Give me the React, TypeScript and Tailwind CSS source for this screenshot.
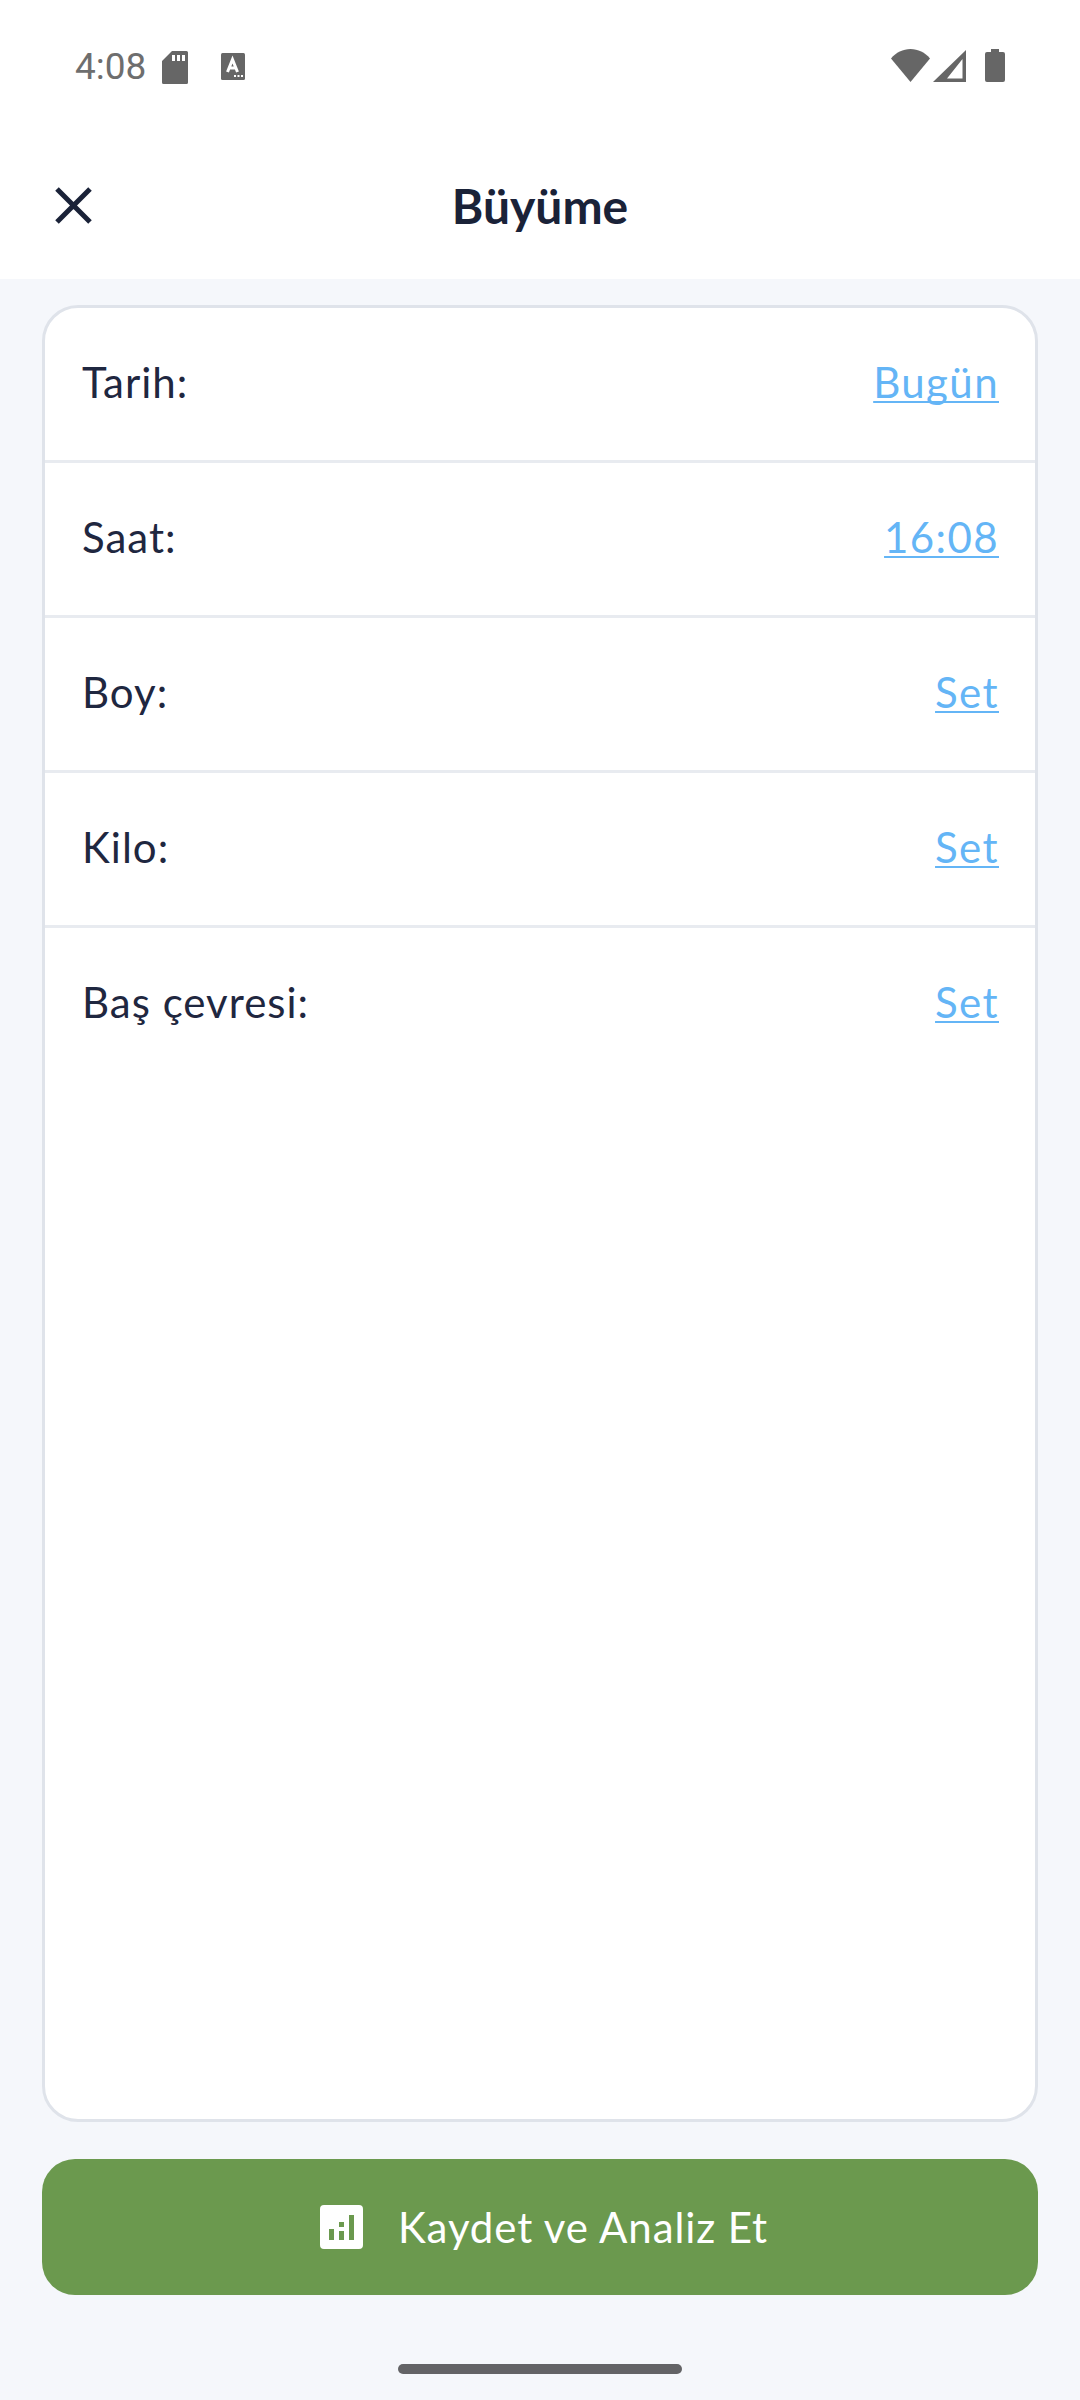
const FONT = 'font-["Lato","Noto_Sans",sans-serif]';

const ROWS = [
  { label: 'Tarih:', value: 'Bugün' },
  { label: 'Saat:', value: '16:08' },
  { label: 'Boy:', value: 'Set' },
  { label: 'Kilo:', value: 'Set' },
  { label: 'Baş çevresi:', value: 'Set' },
];

function StatusBar() {
  return (
    <div className="flex h-[100px] items-start justify-between bg-white pl-[75px] pr-[75px] pt-[49px]">
      <div className="flex items-start">
        <span className='w-[87px] font-["Roboto",sans-serif] text-[37px] leading-[36px] text-[#6e6e6e]'>4:08</span>
        {/* sd card */}
        <svg width="26" height="33" viewBox="0 0 26 33" className="mt-[2px]">
          <path
            fillRule="evenodd"
            fill="#666666"
            d="M10 0H24.5A1.5 1.5 0 0 1 26 1.5V31.5A1.5 1.5 0 0 1 24.5 33H1.5A1.5 1.5 0 0 1 0 31.5V10ZM10 4V10H13V4ZM15 4V10H18V4ZM20 4V10H23V4Z"
          />
        </svg>
        {/* keyboard / autofill notification */}
        <svg width="24" height="27" viewBox="0 0 24 27" className="ml-[33px] mt-[4px]">
          <rect width="24" height="27" rx="1.5" fill="#666666" />
          <path
            fill="none"
            stroke="#ffffff"
            strokeWidth="3"
            d="M6.5 19L11.5 6.5L16.5 19M8 15H15"
          />
          <path fill="#ffffff" d="M13 22h2v2h-2zM16.5 22h2v2h-2zM20 22h2v2h-2z" />
        </svg>
      </div>
      <div className="flex items-start">
        <svg width="39" height="33" viewBox="0 0 39 33">
          <path fill="#666666" d="M0 9.5C5 3.5 12 0 19.5 0S34 3.5 39 9.5L19.5 33Z" />
        </svg>
        <svg width="33" height="32" viewBox="0 0 33 32" className="ml-[3px] mt-[1px]">
          <path
            fillRule="evenodd"
            fill="#666666"
            d="M33 0V32H0ZM29.5 9L14 28.5H29.5Z"
          />
        </svg>
        <svg width="20" height="33" viewBox="0 0 20 33" className="ml-[19px]">
          <path
            fill="#666666"
            d="M6 0H14V3H18A2 2 0 0 1 20 5V31A2 2 0 0 1 18 33H2A2 2 0 0 1 0 31V5A2 2 0 0 1 2 3H6Z"
          />
        </svg>
      </div>
    </div>
  );
}

export default function App() {
  return (
    <div className={`flex h-[2400px] w-[1080px] flex-col bg-[#f5f7fb] ${FONT}`}>
      <StatusBar />

      <div className="relative flex h-[179px] items-center justify-center bg-white pt-[33px]">
        <svg width="37" height="37" viewBox="0 0 37 37" className="absolute left-[55px] top-[87px]">
          <path d="M2 2L35 35M35 2L2 35" stroke="#1a2238" strokeWidth="5" fill="none" />
        </svg>
        <span className="text-[48px] font-bold leading-none text-[#1a2238]">Büyüme</span>
      </div>

      <div className="flex flex-1 flex-col px-[42px] pt-[26px]">
        <div className="h-[1817px] overflow-hidden rounded-[36px] border-[3px] border-[#dfe3ea] bg-white">
          {ROWS.map((row, i) => (
            <div
              key={row.label}
              className={`flex h-[155px] items-center justify-between border-b-[3px] pb-[4px] pl-[37px] pr-[36px] ${
                i < ROWS.length - 1 ? 'border-[#e8ebf0]' : 'border-transparent'
              }`}
            >
              <span className="text-[42px] leading-none tracking-[1px] text-[#1f2740]">{row.label}</span>
              <span className="text-[42px] leading-none tracking-[1.4px] text-[#64b5f6] underline decoration-[1.5px] underline-offset-[3px] [text-decoration-skip-ink:none]">
                {row.value}
              </span>
            </div>
          ))}
        </div>

        <button className="mt-[37px] flex h-[136px] items-center justify-center rounded-[33px] bg-[#6b994e] pl-[8px] text-white">
          <svg width="43" height="44" viewBox="0 0 43 44" className="mr-[35px]">
            <path
              fillRule="evenodd"
              fill="#ffffff"
              d="M4 0H39A4 4 0 0 1 43 4V40A4 4 0 0 1 39 44H4A4 4 0 0 1 0 40V4A4 4 0 0 1 4 0ZM9 24V35H14V24ZM19 17V22H24V17ZM19 26V35H24V26ZM29 10V35H34V10Z"
            />
          </svg>
          <span className="text-[42px] leading-none tracking-[0.9px]">Kaydet ve Analiz Et</span>
        </button>

        <div className="mx-auto mt-[69px] h-[10px] w-[284px] rounded-full bg-[#636366]" />
      </div>
    </div>
  );
}
